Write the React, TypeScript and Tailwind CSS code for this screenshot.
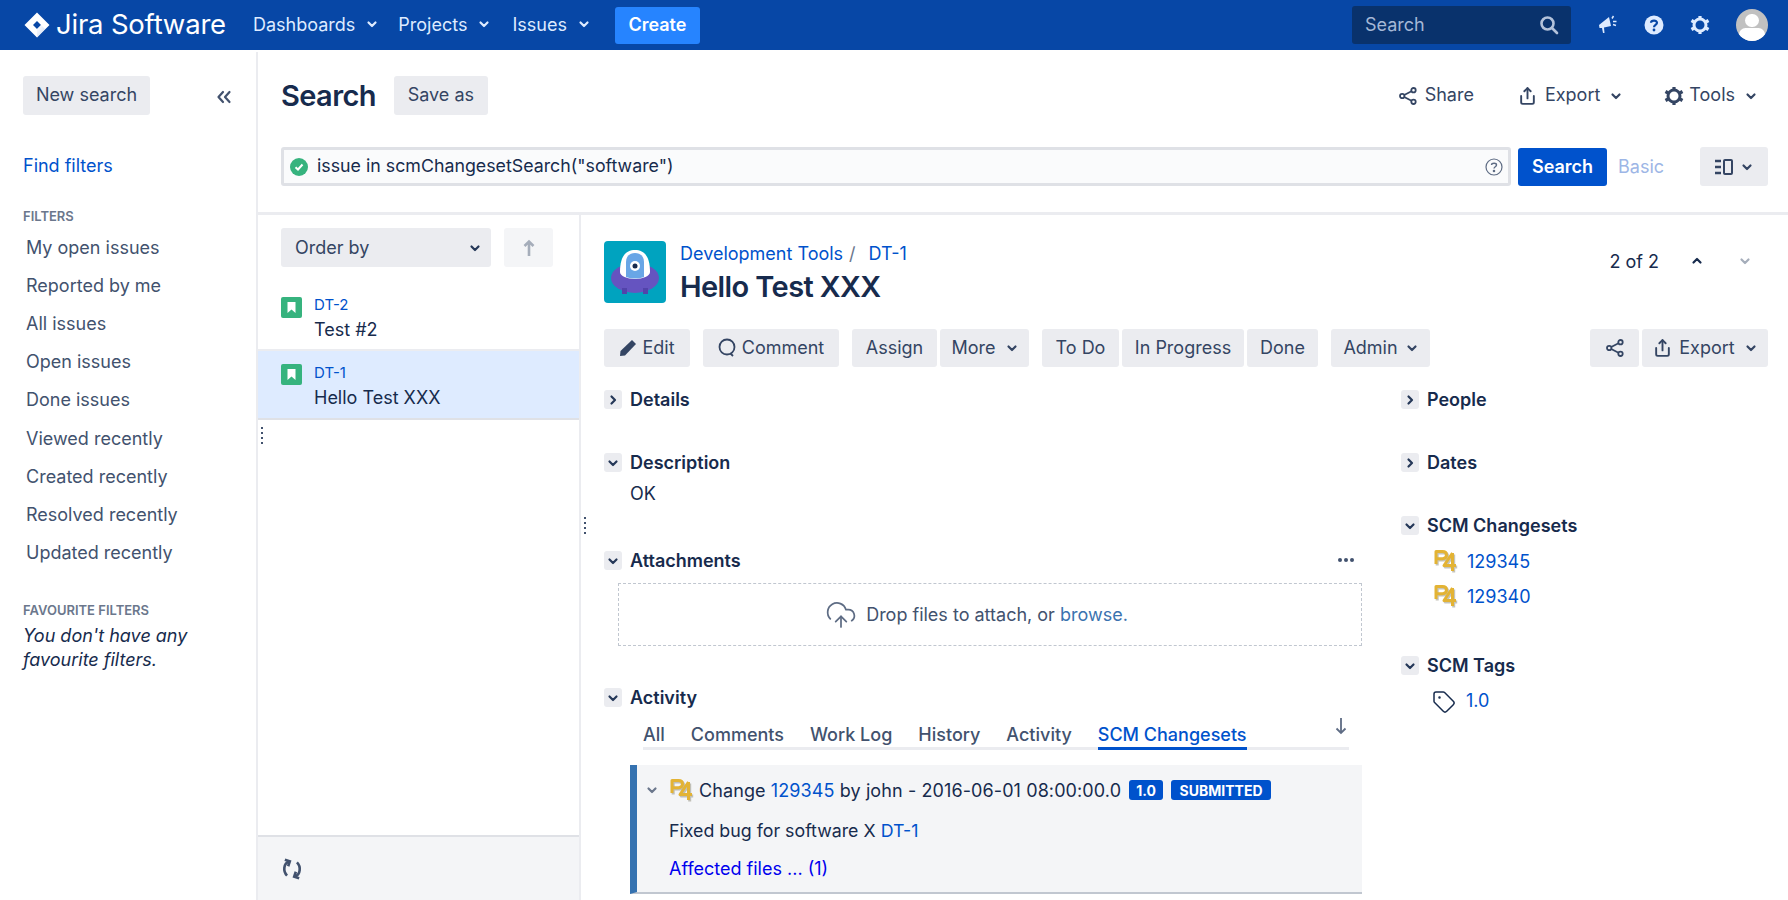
import { CloudUpload, Share, Tag } from "lucide-react";

const Chevron = ({ className = "" }: { className?: string }) => (
  <svg viewBox="0 0 12 12" className={`w-[12px] h-[12px] shrink-0 ${className}`} fill="none" stroke="currentColor" strokeWidth="2.2" strokeLinecap="round" strokeLinejoin="round">
    <path d="M2.5 4.500 6 8l3.500-3.500" />
  </svg>
);

const ChevronRight = () => (
  <svg viewBox="0 0 12 12" className="w-[12px] h-[12px]" fill="none" stroke="#253858" strokeWidth="2.2" strokeLinecap="round" strokeLinejoin="round">
    <path d="M4.500 2.500 8 6l-3.500 3.500" />
  </svg>
);

const Gear = ({ className = "" }: { className?: string }) => (
  <svg viewBox="0 0 20 20" className={`w-[20px] h-[20px] shrink-0 ${className}`} fill="none" stroke="currentColor">
    <circle cx="10" cy="10" r="6" strokeWidth="3" />
    <path strokeWidth="3.200" d="M10 1v3M10 16v3M1.500 5.500l2.600 1.500M15.900 13l2.600 1.500M18.500 5.500 15.900 7M4.100 13l-2.600 1.500" />
  </svg>
);

const ShareNodes = ({ className = "" }: { className?: string }) => (
  <svg viewBox="0 0 18 18" className={`w-[18px] h-[18px] shrink-0 ${className}`} fill="none" stroke="currentColor" strokeWidth="1.800">
    <circle cx="14.500" cy="3.200" r="2.200" />
    <circle cx="3.200" cy="9" r="2.200" />
    <circle cx="14.500" cy="14.800" r="2.200" />
    <path d="M12.500 4.300 5.200 8M5.200 10l7.300 3.700" />
  </svg>
);

const JiraLogo = () => (
  <svg viewBox="0 0 26 26" className="w-[26px] h-[26px] shrink-0">
    <defs>
      <linearGradient id="jg" x1="0" y1="0" x2="1" y2="1">
        <stop offset="0" stopColor="#ffffff" />
        <stop offset="1" stopColor="#a9c1ea" />
      </linearGradient>
    </defs>
    <path fillRule="evenodd" fill="#fff" d="M13 0.500 L25.500 13 L13 25.500 L0.500 13 Z M13 9 L9 13 L13 17 L17 13 Z" />
    <path fill="url(#jg)" d="M13 17 L17 13 L21 17 L13 25.500 Z" opacity="0.6" />
  </svg>
);

const P4Icon = ({ className = "" }: { className?: string }) => (
  <svg viewBox="0 0 25 25" className={`w-[25px] h-[25px] shrink-0 ${className}`} fill="none" strokeLinejoin="round">
    <g stroke="#8d8a78" strokeWidth="3" opacity="0.5" transform="translate(1.200 1.400)">
      <path d="M3 15V2.500h6.500q4 0 4 3.600t-4 3.600H3" />
      <path d="M19.500 4v18M19.500 4 11 16.500h12" />
    </g>
    <g stroke="#e3b334" strokeWidth="3">
      <path d="M3 15V2.500h6.500q4 0 4 3.600t-4 3.600H3" />
      <path d="M19.500 4v18M19.500 4 11 16.500h12" />
    </g>
  </svg>
);

const StoryIcon = () => (
  <svg viewBox="0 0 21 21" className="w-[21px] h-[21px] shrink-0">
    <rect width="21" height="21" rx="2" fill="#36b37e" />
    <path d="M6.500 5h8v11l-4-3.400-4 3.400z" fill="#fff" />
  </svg>
);

const Dots = () => (
  <div className="flex flex-col gap-[3px]">
    <span className="w-[2px] h-[2px] bg-[#42526e]" />
    <span className="w-[2px] h-[2px] bg-[#42526e]" />
    <span className="w-[2px] h-[2px] bg-[#42526e]" />
    <span className="w-[2px] h-[2px] bg-[#42526e]" />
  </div>
);

const Gray = ({ className = "", children }: { className?: string; children: React.ReactNode }) => (
  <div className={`flex items-center h-[38px] rounded-[3px] bg-[#ebecf0] text-[#344563] ${className}`}>{children}</div>
);

const SectionHead = ({ title, open }: { title: string; open?: boolean }) => (
  <div className="flex items-center h-[19px] gap-[8px]">
    <div className="flex items-center justify-center w-[18px] h-[19px] rounded-[3px] bg-[#ebecf0] text-[#253858]">
      {open ? <Chevron /> : <ChevronRight />}
    </div>
    <span className="pb-[1px] font-semibold text-[#172b4d]">{title}</span>
  </div>
);

const filters = [
  "My open issues",
  "Reported by me",
  "All issues",
  "Open issues",
  "Done issues",
  "Viewed recently",
  "Created recently",
  "Resolved recently",
  "Updated recently",
];

const Header = () => (
  <header className="flex items-center h-[50px] bg-[#0747a6] text-[#deebff] shrink-0">
    <div className="ml-[24px] flex items-center gap-[6px]">
      <JiraLogo />
      <span className="text-[27.5px] leading-none text-white tracking-[-0.2px]">Jira Software</span>
    </div>
    <div className="ml-[27px] pb-[2px] flex items-center gap-[11px]">Dashboards<Chevron /></div>
    <div className="ml-[20px] pb-[2px] flex items-center gap-[11px]">Projects<Chevron /></div>
    <div className="ml-[22px] pb-[2px] flex items-center gap-[11px]">Issues<Chevron /></div>
    <div className="ml-[25px] pb-[2px] flex items-center justify-center w-[85px] h-[37px] rounded-[3px] bg-[#2684ff] text-white font-semibold">Create</div>
    <div className="ml-auto flex items-center justify-between w-[219px] h-[38px] rounded-[3px] bg-[#09326c] pl-[13px] pr-[12px] text-[#a5b8d6]">
      <span className="pb-[2px]">Search</span>
      <svg viewBox="0 0 20 20" className="w-[20px] h-[20px]" fill="none" stroke="#b3c2da" strokeWidth="2.6" strokeLinecap="round">
        <circle cx="8.500" cy="8.500" r="6" />
        <path d="M13 13l5 5" />
      </svg>
    </div>
    <svg viewBox="0 0 20 20" className="ml-[27px] w-[20px] h-[20px]" fill="#deebff">
      <path d="M1 10 11 2l2 9-7 1.500.5 5.500H5l-1-5H1.500z" />
      <path d="M14 3.500l1.500-2.500M15 6.500h3.500M15 9.500l3 1" stroke="#deebff" strokeWidth="1.500" />
    </svg>
    <svg viewBox="0 0 20 20" className="ml-[26px] w-[20px] h-[20px]">
      <circle cx="10" cy="10" r="9.500" fill="#deebff" />
      <path d="M7 7.800C7.200 4.800 13 4.800 13 7.800c0 2.300-3 2-3 4.500" fill="none" stroke="#0747a6" strokeWidth="2.200" />
      <circle cx="10" cy="15" r="1.400" fill="#0747a6" />
    </svg>
    <Gear className="ml-[26px]" />
    <div className="ml-[26px] mr-[20px] w-[32px] h-[32px] rounded-full bg-[#c1c1c1] overflow-hidden flex flex-col items-center">
      <div className="w-[14px] h-[15px] rounded-full bg-white mt-[5px]" />
      <div className="w-[26px] h-[16px] rounded-full bg-white mt-[1px]" />
    </div>
  </header>
);

const Sidebar = () => (
  <aside className="w-[258px] shrink-0 border-r-2 border-[#ebecf0] pt-[24px] mt-[2px] text-[#42526e]">
    <div className="flex items-center justify-between pl-[23px] pr-[24px]">
      <Gray className="w-[127px] h-[39px] pb-[2px] justify-center">New search</Gray>
      <svg viewBox="0 0 16 16" className="w-[16px] h-[16px] mt-[2px]" fill="none" stroke="#42526e" strokeWidth="2.200" strokeLinecap="round" strokeLinejoin="round">
        <path d="M7 3 2.500 8 7 13M13.500 3 9 8l4.500 5" />
      </svg>
    </div>
    <div className="pl-[23px] mt-[36px] h-[28px] flex items-center text-[#0052cc]">Find filters</div>
    <div className="pl-[23px] mt-[29px] h-[18px] flex items-center text-[13px] font-semibold text-[#6b778c]">FILTERS</div>
    <div className="mt-[2px] pl-[26px] flex flex-col">
      {filters.map((f) => (
        <div key={f} className="h-[38.2px] flex items-center">{f}</div>
      ))}
    </div>
    <div className="pl-[23px] mt-[30px] h-[18px] flex items-center text-[13px] font-semibold text-[#6b778c]">FAVOURITE FILTERS</div>
    <div className="pl-[23px] mt-[4px] italic text-[#172b4d] leading-[24px]">
      You don't have any
      <br />
      favourite filters.
    </div>
  </aside>
);

const SearchBar = () => (
  <div className="h-[163px] shrink-0 border-b-[3px] border-[#ebecf0] pl-[23px] pr-[20px] pt-[24px] mt-[2px]">
    <div className="flex items-center h-[39px]">
      <div className="text-[29px] font-semibold text-[#172b4d] tracking-[-0.6px]">Search</div>
      <Gray className="ml-[18px] w-[94px] h-[39px] pb-[2px] justify-center">Save as</Gray>
      <div className="ml-auto flex items-center text-[#344563]">
        <ShareNodes />
        <span className="ml-[8px] pb-[2px]">Share</span>
        <Share className="ml-[44px] w-[19px] h-[20px]" strokeWidth={2.400} />
        <span className="ml-[8px] pb-[2px]">Export</span>
        <Chevron className="ml-[10px]" />
        <Gear className="ml-[42px] text-[#344563]" />
        <span className="ml-[5px] pb-[2px]">Tools</span>
        <Chevron className="ml-[10px] mr-[11px]" />
      </div>
    </div>
    <div className="flex items-center mt-[32px] h-[39px]">
      <div className="flex items-center w-[1230px] h-[39px] rounded-[3px] border-[3px] border-[#dfe1e6] bg-[#fafbfc] pl-[6px] pr-[5px] text-[#172b4d]">
        <svg viewBox="0 0 18 18" className="w-[18px] h-[18px] shrink-0">
          <circle cx="9" cy="9" r="9" fill="#36b37e" />
          <path d="M5.500 9.200 8 11.500l4.500-5" fill="none" stroke="#fff" strokeWidth="2" />
        </svg>
        <span className="ml-[9px] text-[17.8px]">issue in scmChangesetSearch("software")</span>
        <svg viewBox="0 0 18 18" className="ml-auto w-[18px] h-[18px]" fill="none" stroke="#5e6c84" strokeWidth="1.200">
          <circle cx="9" cy="9" r="8" />
          <path d="M6.500 7C6.700 4.700 11.500 4.700 11.500 7c0 1.800-2.500 1.700-2.500 3.600" strokeWidth="1.400" />
          <circle cx="9" cy="13" r="0.700" fill="#5e6c84" />
        </svg>
      </div>
      <div className="ml-[7px] flex items-center justify-center w-[89px] h-[38px] rounded-[3px] bg-[#0052cc] text-white font-semibold">Search</div>
      <span className="ml-[11px] text-[#9db6e6]">Basic</span>
      <Gray className="ml-auto w-[68px] h-[39px] justify-center gap-[8px] text-[#253858]">
        <svg viewBox="0 0 18 16" className="w-[18px] h-[16px]" fill="none" stroke="currentColor">
          <path d="M0 2h6M0 8h6M0 14h6" strokeWidth="2.600" />
          <rect x="9" y="1" width="8" height="14" rx="1" strokeWidth="2" />
        </svg>
        <Chevron />
      </Gray>
    </div>
  </div>
);

const IssueList = () => (
  <div className="w-[323px] shrink-0 border-r-2 border-[#ebecf0] flex flex-col">
    <div className="flex items-center pl-[23px] pt-[13px] gap-[13px]">
      <Gray className="w-[210px] h-[39px] justify-between pl-[14px] pr-[10px]">
        Order by
        <Chevron className="text-[#253858]" />
      </Gray>
      <div className="flex items-center justify-center w-[49px] h-[39px] rounded-[3px] bg-[#f4f5f7]">
        <svg viewBox="0 0 14 18" className="w-[14px] h-[18px]" fill="none" stroke="#a5adba" strokeWidth="2.600">
          <path d="M7 17V3M2.500 7 7 2.500 11.500 7" />
        </svg>
      </div>
    </div>
    <div className="mt-[21px] h-[63px] border-b-2 border-[#ebecf0] flex pl-[23px] pt-[8px]">
      <div className="mt-[1px]"><StoryIcon /></div>
      <div className="ml-[12px]">
        <div className="text-[15px] leading-[18px] text-[#0052cc]">DT-2</div>
        <div className="mt-[4px] leading-[24px] text-[#172b4d]">Test #2</div>
      </div>
    </div>
    <div className="h-[69px] bg-[#deebff] border-b-2 border-[#dfe1e6] flex pl-[23px] pt-[13px]">
      <div><StoryIcon /></div>
      <div className="ml-[12px]">
        <div className="text-[15px] leading-[18px] text-[#0052cc]">DT-1</div>
        <div className="mt-[4px] leading-[24px] text-[#172b4d]">Hello Test XXX</div>
      </div>
    </div>
    <div className="ml-[3px] mt-[7px]"><Dots /></div>
    <div className="mt-auto h-[65px] border-t-2 border-[#dfe1e6] bg-[#f4f5f7] flex items-center pl-[23px]">
      <svg viewBox="0 0 20 20" className="w-[22px] h-[22px]" fill="none" stroke="#42526e" strokeWidth="2.400">
        <path d="M7 3.500C2.500 5 1.500 12 5.500 16M13 16.500C17.500 15 18.500 8 14.500 4" />
        <path d="M3.500 1.500 8 3 6.500 7.500M16.500 18.500 12 17l1.500-4.500" />
      </svg>
    </div>
  </div>
);

const tabs = ["All", "Comments", "Work Log", "History", "Activity"];

const Detail = () => (
  <div className="relative flex-1 pl-[23px] pr-[20px] pt-[26px] overflow-hidden">
    <div className="absolute left-[3px] top-[302px]"><Dots /></div>
    <div className="flex h-[62px]">
      <svg viewBox="0 0 62 62" className="w-[62px] h-[62px] shrink-0">
        <rect width="62" height="62" rx="4" fill="#00a3bf" />
        <ellipse cx="31" cy="37" rx="24" ry="15" fill="#6554c0" />
        <path d="M18 47h5v6h-5zM39 47h5v6h-5z" fill="#5243aa" />
        <path d="M16 31C16 15 22 9 31 9s15 6 15 22c0 4-7 7-15 7s-15-3-15-7z" fill="#fff" />
        <path d="M22 36V21c0-6 4-9 9-9s9 3 9 9v15c-6 2-12 2-18 0z" fill="#69a6e6" />
        <circle cx="31" cy="25" r="5" fill="#fff" />
        <circle cx="31" cy="25" r="2.500" fill="#172b4d" />
      </svg>
      <div className="ml-[14px]">
        <div className="flex items-center h-[27px] pb-[2px] text-[#0052cc]">
          Development Tools
          <span className="text-[#6b778c] ml-[6px] mr-[13px]">/</span>
          DT-1
        </div>
        <div className="text-[29px] leading-[36px] mt-[1px] font-semibold text-[#172b4d] tracking-[-0.6px]">Hello Test XXX</div>
      </div>
      <div className="ml-auto flex items-center h-[40px] text-[#172b4d]">
        2 of 2
        <Chevron className="ml-[32px] rotate-180" />
        <Chevron className="ml-[36px] mr-[17px] text-[#a5adba]" />
      </div>
    </div>
    <div className="flex items-center mt-[26px]">
      <Gray className="w-[86px] pb-[1px] justify-center gap-[5px]">
        <svg viewBox="0 0 18 18" className="w-[18px] h-[18px]" fill="#344563">
          <path d="M13 1 17 5 6 16.500 1 17 1.500 12z" />
        </svg>
        Edit
      </Gray>
      <Gray className="ml-[13px] w-[136px] pb-[1px] justify-center gap-[6px]">
        <svg viewBox="0 0 18 19" className="w-[18px] h-[19px]" fill="none" stroke="#344563" strokeWidth="1.800">
          <circle cx="9" cy="9" r="7.500" />
          <path d="M12.500 15.500 15 18" />
        </svg>
        Comment
      </Gray>
      <Gray className="ml-[13px] w-[85px] pb-[1px] justify-center">Assign</Gray>
      <Gray className="ml-[3px] w-[89px] pb-[1px] justify-center gap-[10px]">More<Chevron /></Gray>
      <Gray className="ml-[13px] w-[77px] pb-[1px] justify-center">To Do</Gray>
      <Gray className="ml-[3px] w-[122px] pb-[1px] justify-center">In Progress</Gray>
      <Gray className="ml-[3px] w-[71px] pb-[1px] justify-center">Done</Gray>
      <Gray className="ml-[13px] w-[99px] pb-[1px] justify-center gap-[8px]">Admin<Chevron /></Gray>
      <Gray className="ml-auto w-[49px] justify-center">
        <ShareNodes className="text-[#344563]" />
      </Gray>
      <Gray className="ml-[3px] w-[126px] pb-[1px] justify-center gap-[7px]">
        <Share className="w-[19px] h-[20px]" strokeWidth={2.400} />
        Export
        <Chevron className="ml-[3px]" />
      </Gray>
    </div>
    <div className="flex mt-[23px]">
      <div className="w-[758px] shrink-0">
        <SectionHead title="Details" />
        <div className="mt-[44px]"><SectionHead title="Description" open /></div>
        <div className="ml-[26px] mt-[10px] h-[24px] leading-[24px] text-[#172b4d]">OK</div>
        <div className="mt-[45px] flex items-center justify-between">
          <SectionHead title="Attachments" open />
          <div className="flex gap-[2px] mr-[8px] mb-[2px]">
            <span className="w-[4px] h-[4px] rounded-full bg-[#42526e]" />
            <span className="w-[4px] h-[4px] rounded-full bg-[#42526e]" />
            <span className="w-[4px] h-[4px] rounded-full bg-[#42526e]" />
          </div>
        </div>
        <div className="ml-[14px] mt-[13px] h-[63px] border border-dashed border-[#c1c7d0] flex items-center justify-center pr-[27px] text-[#42526e]">
          <CloudUpload className="w-[32px] h-[32px] text-[#5e6c84]" strokeWidth={1.300} />
          <span className="ml-[9px]">Drop files to attach, or <span className="text-[#3b73af]">browse.</span></span>
        </div>
        <div className="mt-[42px]"><SectionHead title="Activity" open /></div>
        <div className="relative ml-[39px] mr-[13px] mt-[15px] h-[28px] border-b-[3px] border-[#ebecf0] flex text-[#42526e] font-medium gap-[26px]">
          {tabs.map((t) => (
            <div key={t} className="leading-[26px]">{t}</div>
          ))}
          <div className="h-[28px] leading-[26px] text-[#0052cc] border-b-[3px] border-[#0052cc]">SCM Changesets</div>
          <svg viewBox="0 0 12 18" className="absolute right-[2px] -top-[5px] w-[12px] h-[18px]" fill="none" stroke="#5e6c84" strokeWidth="1.800">
            <path d="M6 1v15M1.500 11.500 6 16l4.500-4.500" />
          </svg>
        </div>
        <div className="ml-[26px] mt-[15px] h-[129px] bg-[#f4f5f7] border-l-[7px] border-l-[#3572b0] border-b-2 border-b-[#c1c7d0] pl-[9px] pt-[10px] text-[#172b4d]">
          <div className="flex items-center h-[30px]">
            <Chevron className="text-[#6b778c]" />
            <P4Icon className="ml-[11px]" />
            <span className="ml-[5px] tracking-[0.1px]">Change <span className="text-[#0052cc]">129345</span> by john - 2016-06-01 08:00:00.0</span>
            <span className="ml-[8px] h-[20px] w-[34px] rounded-[3px] bg-[#0052cc] text-white text-[14px] font-bold flex items-center justify-center">1.0</span>
            <span className="ml-[8px] h-[20px] w-[100px] rounded-[3px] bg-[#0052cc] text-white text-[14px] font-bold flex items-center justify-center">SUBMITTED</span>
          </div>
          <div className="ml-[23px] mt-[14px] h-[24px] leading-[24px] text-[17.8px]">Fixed bug for software X <span className="text-[#0052cc]">DT-1</span></div>
          <div className="ml-[23px] mt-[14px] h-[24px] leading-[24px] text-[#0000ee]">Affected files ... (1)</div>
        </div>
      </div>
      <div className="ml-[39px] flex-1">
        <SectionHead title="People" />
        <div className="mt-[44px]"><SectionHead title="Dates" /></div>
        <div className="mt-[44px]"><SectionHead title="SCM Changesets" open /></div>
        <div className="mt-[11px] flex items-center h-[30px] pl-[32px] text-[#0052cc]">
          <P4Icon />
          <span className="ml-[9px]">129345</span>
        </div>
        <div className="mt-[5px] flex items-center h-[30px] pl-[32px] text-[#0052cc]">
          <P4Icon />
          <span className="ml-[9px]">129340</span>
        </div>
        <div className="mt-[45px]"><SectionHead title="SCM Tags" open /></div>
        <div className="mt-[15px] flex items-center h-[24px] pl-[31px] text-[#0052cc]">
          <Tag className="w-[24px] h-[24px] text-[#172b4d]" strokeWidth={1.500} />
          <span className="ml-[10px] pb-[3px]">1.0</span>
        </div>
      </div>
    </div>
  </div>
);

export default function App() {
  return (
    <div className="h-[900px] w-[1788px] overflow-hidden flex flex-col bg-white font-['Inter',sans-serif] text-[18px]">
      <Header />
      <div className="flex flex-1 min-h-0">
        <Sidebar />
        <div className="flex-1 flex flex-col min-w-0">
          <SearchBar />
          <div className="flex flex-1 min-h-0">
            <IssueList />
            <Detail />
          </div>
        </div>
      </div>
    </div>
  );
}
